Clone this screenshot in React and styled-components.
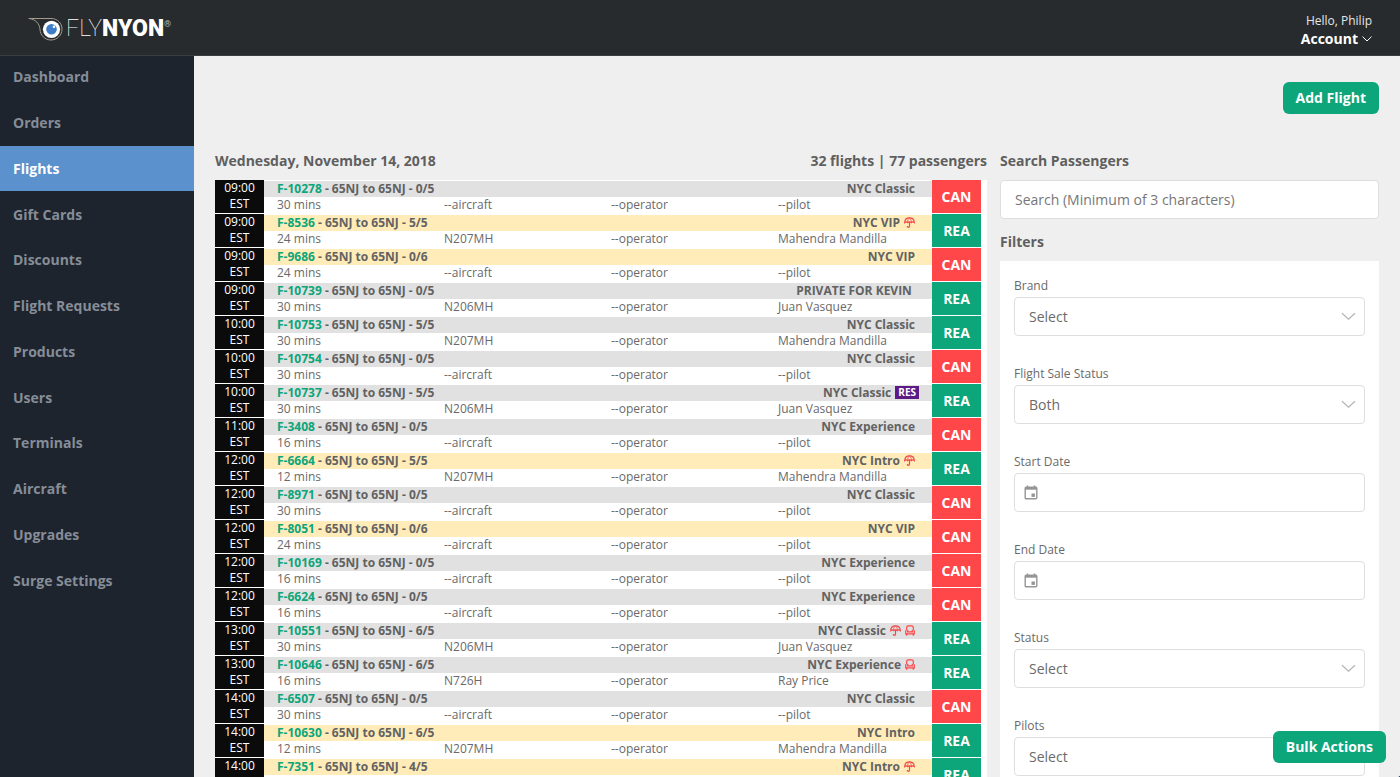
import React from "react";
import styled, { createGlobalStyle, css } from "styled-components";

const color = {
  header: "#272b2d",
  sidebar: "#1d242d",
  active: "#5b91cd",
  green: "#0da57a",
  red: "#ff4649",
  page: "#efefef",
  text: "#6a6a6a",
  heading: "#5f5f5f",
  border: "#dedede",
};

const GlobalStyle = createGlobalStyle`
  * { box-sizing: border-box; }
  body {
    margin: 0;
    background: ${color.page};
    color: ${color.text};
    font-family: "Open Sans", "Noto Sans", sans-serif;
  }
  button, input, select { font: inherit; color: inherit; }
`;

const Shell = styled.div`
  display: flex;
  flex-direction: column;
  height: 100vh;
  overflow: hidden;
`;

const Header = styled.header`
  position: relative;
  z-index: 1;
  display: flex;
  flex: none;
  align-items: center;
  justify-content: space-between;
  height: 56px;
  padding: 2px 28px 0;
  background: ${color.header};
  border-bottom: 1px solid #3a3e40;
`;

const Logo = styled.a`
  display: flex;
  align-items: center;
  color: #fff;
  font-family: Roboto, sans-serif;
  font-size: 23px;
  line-height: 26px;
  text-decoration: none;
`;

const LogoMark = styled.svg`
  width: 38px;
  height: 26px;
`;

const LogoThin = styled.span`
  font-weight: 100;
`;

const LogoBold = styled.span`
  font-weight: 900;
`;

const LogoMarkSign = styled.span`
  align-self: flex-start;
  font-size: 9px;
  line-height: 16px;
  color: #b5b5b5;
`;

const Account = styled.div`
  display: flex;
  flex-direction: column;
  align-items: flex-end;
  color: #fff;
  padding-top: 2px;
`;

const Greeting = styled.span`
  font-size: 12px;
  line-height: 18px;
  color: #e6e6e6;
`;

const AccountButton = styled.button`
  display: flex;
  align-items: center;
  gap: 4px;
  padding: 0;
  border: 0;
  background: none;
  font-size: 14px;
  font-weight: 700;
  line-height: 18px;
`;

const Body = styled.div`
  display: flex;
  flex: 1;
  min-height: 0;
`;

const Sidebar = styled.nav`
  flex: 0 0 194px;
  margin-top: -2px;
  background: ${color.sidebar};
`;

const NavList = styled.ul`
  display: grid;
  grid-auto-rows: 1fr;
  height: 549px;
  margin: 0;
  padding: 0;
  list-style: none;
`;

const NavLink = styled.a`
  display: flex;
  align-items: center;
  height: 100%;
  padding: 0 13px;
  font-size: 14px;
  font-weight: 700;
  text-decoration: none;
  color: ${(p) => (p.$active ? "#fff" : "#868d98")};
  background: ${(p) => (p.$active ? color.active : "transparent")};
`;

const Main = styled.main`
  flex: 1;
  min-width: 0;
  padding: 26px 21px;
  overflow-y: auto;
  scrollbar-width: none;
`;

const Actions = styled.div`
  display: flex;
  justify-content: flex-end;
  margin-bottom: 36px;
`;

const PrimaryButton = styled.button`
  height: 32px;
  padding: 0 13px 1px;
  border: 0;
  border-radius: 6px;
  background: ${color.green};
  color: #fff;
  font-size: 14px;
  font-weight: 700;
`;

const FloatingButton = styled(PrimaryButton)`
  position: fixed;
  right: 14px;
  bottom: 14px;
`;

const ChatBubble = styled.button`
  position: fixed;
  right: -42px;
  bottom: -42px;
  width: 50px;
  height: 50px;
  padding: 0;
  border: 0;
  border-radius: 50%;
  background: #12395a;
`;

const Columns = styled.div`
  display: grid;
  grid-template-columns: minmax(0, 1fr) 379px;
  gap: 13px;
  align-items: start;
`;

const HeadingRow = styled.div`
  display: flex;
  justify-content: space-between;
  margin-bottom: 8px;
`;

const Heading = styled.h2`
  margin: 0;
  font-size: 14px;
  font-weight: 700;
  line-height: 22px;
  color: ${color.heading};
`;

const FlightTable = styled.table`
  width: 100%;
  table-layout: fixed;
  border-spacing: 0;
  background: #fff;
  font-size: 12px;
  line-height: 16px;

  td { padding: 0; }
`;

const TimeCol = styled.col`
  width: 49px;
`;

const GutterCol = styled.col`
  width: 6px;
`;

const SideCell = styled.td`
  border-bottom: 1px solid #fff;
  color: #fff;
  text-align: center;
`;

const TimeCell = styled(SideCell)`
  background: #0b0b0b;
  vertical-align: top;
`;

const StatusCell = styled(SideCell)`
  background: ${(p) => (p.$ready ? color.green : color.red)};
  font-size: 14px;
  font-weight: 700;
`;

const titleCell = css`
  height: 17px;
  border-top: 1px solid #fff;
  background: ${(p) => (p.$vip ? "#ffecb9" : "#e1e1e1")};
  font-weight: 700;
  line-height: 15px;
  color: #626262;
  vertical-align: top;
`;

const RouteCell = styled.td`
  ${titleCell}
  && { padding-left: 13px; }
`;

const BrandCell = styled.td`
  ${titleCell}
  && { padding-right: ${(p) => (p.$tight ? "13px" : "17px")}; }
`;

const BrandLine = styled.div`
  display: flex;
  align-items: center;
  justify-content: flex-end;
  gap: 4px;
  height: 15px;
  white-space: pre;
`;

const FlightLink = styled.a`
  color: ${color.green};
  text-decoration: none;
`;

const DetailCell = styled.td`
  height: 17px;
  vertical-align: top;
  && { padding-left: 13px; }
`;

const Reserved = styled.span`
  padding: 0 3px;
  background: #5b1a85;
  color: #fff;
  font-size: 10px;
  line-height: 13px;
`;

const SearchInput = styled.input`
  display: block;
  width: 100%;
  height: 39px;
  margin-bottom: 12px;
  padding: 0 14px;
  border: 1px solid ${color.border};
  border-radius: 4px;
  background: #fff;
  font-size: 14px;
  &::placeholder { color: #777; opacity: 1; }
`;

const FilterPanel = styled.form`
  padding: 14px;
  background: #fff;
`;

const Field = styled.div`
  margin-bottom: 27px;
`;

const Label = styled.label`
  display: block;
  font-size: 12px;
  line-height: 22px;
`;

const Control = styled.div`
  position: relative;
`;

const Select = styled.select`
  display: block;
  width: 100%;
  height: 39px;
  padding: 0 14px;
  border: 1px solid ${color.border};
  border-radius: 4px;
  background: #fff;
  font-size: 14px;
  appearance: none;
`;

const DateInput = styled.input`
  display: block;
  width: 100%;
  height: 39px;
  padding: 0 14px 0 34px;
  border: 1px solid ${color.border};
  border-radius: 4px;
  background: #fff;
  font-size: 14px;
`;

const SelectArrow = styled.svg`
  position: absolute;
  top: 15px;
  right: 9px;
  width: 15px;
  height: 9px;
  pointer-events: none;
`;

const DateIcon = styled.svg`
  position: absolute;
  top: 12px;
  left: 10px;
  width: 14px;
  height: 15px;
  pointer-events: none;
`;

const Umbrella = () => (
  <svg width="11" height="11" viewBox="0 0 11 11" fill="none" stroke="#f0484a" strokeWidth="1.200" role="img" aria-label="Weather">
    <path d="M.7 5.600C.8 2.500 2.800.9 5.500.9s4.700 1.600 4.800 4.700c-1-.9-2-.9-2.900 0-.9-.9-2.900-.9-3.800 0-.9-.9-1.900-.9-2.900 0z" />
    <path d="M3.600 5.200C3.700 3.200 4.300 1.800 5.500.9 6.700 1.800 7.300 3.200 7.400 5.200" strokeWidth=".8" />
    <path d="M5.500 5v4c0 1.700-2.200 1.700-2.200.1" />
  </svg>
);

const Seat = () => (
  <svg width="10" height="11" viewBox="0 0 10 11" fill="none" stroke="#ff4649" strokeWidth="1.200" role="img" aria-label="Seat">
    <path d="M1.700 5.500V2.300C1.700 1.200 2.400.8 3.300.8h3.400c.9 0 1.600.4 1.600 1.500v3.200" />
    <path d="M.7 5.200v3.700h8.600V5.200M2.700 5v1.900h4.600V5" />
    <path d="M1.700 8.800v1.900M8.300 8.800v1.900" />
  </svg>
);

const NAV = [
  "Dashboard", "Orders", "Flights", "Gift Cards", "Discounts", "Flight Requests",
  "Products", "Users", "Terminals", "Aircraft", "Upgrades", "Surge Settings",
];

const MM = "Mahendra Mandilla";

const FLIGHTS = [
  { time: "09:00", id: "F-10278", load: "0/5", mins: 30, brand: "NYC Classic" },
  { time: "09:00", id: "F-8536", load: "5/5", mins: 24, brand: "NYC VIP", vip: true, umbrella: true, craft: "N207MH", pilot: MM },
  { time: "09:00", id: "F-9686", load: "0/6", mins: 24, brand: "NYC VIP", vip: true },
  { time: "09:00", id: "F-10739", load: "0/5", mins: 30, brand: "PRIVATE FOR KEVIN ", craft: "N206MH", pilot: "Juan Vasquez" },
  { time: "10:00", id: "F-10753", load: "5/5", mins: 30, brand: "NYC Classic", craft: "N207MH", pilot: MM },
  { time: "10:00", id: "F-10754", load: "0/5", mins: 30, brand: "NYC Classic" },
  { time: "10:00", id: "F-10737", load: "5/5", mins: 30, brand: "NYC Classic", reserved: true, craft: "N206MH", pilot: "Juan Vasquez" },
  { time: "11:00", id: "F-3408", load: "0/5", mins: 16, brand: "NYC Experience" },
  { time: "12:00", id: "F-6664", load: "5/5", mins: 12, brand: "NYC Intro", vip: true, umbrella: true, craft: "N207MH", pilot: MM },
  { time: "12:00", id: "F-8971", load: "0/5", mins: 30, brand: "NYC Classic" },
  { time: "12:00", id: "F-8051", load: "0/6", mins: 24, brand: "NYC VIP", vip: true },
  { time: "12:00", id: "F-10169", load: "0/5", mins: 16, brand: "NYC Experience" },
  { time: "12:00", id: "F-6624", load: "0/5", mins: 16, brand: "NYC Experience" },
  { time: "13:00", id: "F-10551", load: "6/5", mins: 30, brand: "NYC Classic", umbrella: true, seat: true, craft: "N206MH", pilot: "Juan Vasquez" },
  { time: "13:00", id: "F-10646", load: "6/5", mins: 16, brand: "NYC Experience", seat: true, craft: "N726H", pilot: "Ray Price" },
  { time: "14:00", id: "F-6507", load: "0/5", mins: 30, brand: "NYC Classic" },
  { time: "14:00", id: "F-10630", load: "6/5", mins: 12, brand: "NYC Intro", vip: true, craft: "N207MH", pilot: MM },
  { time: "14:00", id: "F-7351", load: "4/5", mins: 12, brand: "NYC Intro", vip: true, umbrella: true, craft: "N207MH", pilot: MM },
];

const FILTERS = [
  { id: "brand", label: "Brand", value: "Select" },
  { id: "sale", label: "Flight Sale Status", value: "Both" },
  { id: "start", label: "Start Date", date: true },
  { id: "end", label: "End Date", date: true },
  { id: "status", label: "Status", value: "Select" },
  { id: "pilots", label: "Pilots", value: "Select" },
];

function Flight({ flight }) {
  const ready = Boolean(flight.craft);
  return (
    <tbody>
      <tr>
        <TimeCell rowSpan={2}>{flight.time}<br />EST</TimeCell>
        <RouteCell colSpan={2} $vip={flight.vip}>
          <FlightLink href="#flight">{flight.id}</FlightLink> - 65NJ to 65NJ - {flight.load}
        </RouteCell>
        <BrandCell colSpan={2} $vip={flight.vip} $tight={flight.reserved}>
          <BrandLine>
            {flight.brand}
            {flight.umbrella && <Umbrella />}
            {flight.seat && <Seat />}
            {flight.reserved && <Reserved>RES</Reserved>}
          </BrandLine>
        </BrandCell>
        <StatusCell rowSpan={2} $ready={ready}>{ready ? "REA" : "CAN"}</StatusCell>
        <td rowSpan={2} />
      </tr>
      <tr>
        <DetailCell>{flight.mins} mins</DetailCell>
        <DetailCell>{flight.craft || "--aircraft"}</DetailCell>
        <DetailCell>--operator</DetailCell>
        <DetailCell>{flight.pilot || "--pilot"}</DetailCell>
      </tr>
    </tbody>
  );
}

function Filter({ filter }) {
  return (
    <Field>
      <Label htmlFor={filter.id}>{filter.label}</Label>
      <Control>
        {filter.date ? (
          <>
            <DateInput id={filter.id} type="text" />
            <DateIcon viewBox="0 0 14 15" aria-hidden="true">
              <path d="M3.500.5v2M10.500.5v2" stroke="#959595" strokeWidth="1.500" />
              <rect x="1.200" y="2.200" width="11.600" height="11.600" rx="1" fill="none" stroke="#959595" strokeWidth="1.400" />
              <path d="M1 3.500h12" stroke="#959595" strokeWidth="2.400" />
              <rect x="7.500" y="8.500" width="3.400" height="3.400" fill="#959595" />
            </DateIcon>
          </>
        ) : (
          <>
            <Select id={filter.id} defaultValue={filter.value}>
              <option>{filter.value}</option>
            </Select>
            <SelectArrow viewBox="0 0 15 9" aria-hidden="true">
              <path d="M1 1.200l6.500 6 6.500-6" fill="none" stroke="#b5b5b5" strokeWidth="1.300" />
            </SelectArrow>
          </>
        )}
      </Control>
    </Field>
  );
}

export default function App() {
  return (
    <Shell>
      <GlobalStyle />
      <Header>
        <Logo href="#home">
          <LogoMark viewBox="0 0 38 26" aria-hidden="true">
            <path d="M.8 2.500H23c6.500 0 11 4.600 11 10.700S29 24 23 24c-6.200 0-10.500-4.600-11-10.500C11.600 8 8 3.200.8 2.500z" fill="none" stroke="#a39b90" strokeWidth="1" />
            <circle cx="23.500" cy="13.300" r="8.600" fill="#fff" />
            <circle cx="23.500" cy="13.300" r="5.300" fill="#3d7dca" />
            <circle cx="26" cy="10.800" r="1.300" fill="#fff" />
          </LogoMark>
          <LogoThin>FLY</LogoThin>
          <LogoBold>NYON</LogoBold>
          <LogoMarkSign>®</LogoMarkSign>
        </Logo>
        <Account>
          <Greeting>Hello, Philip</Greeting>
          <AccountButton type="button">
            Account
            <svg width="10" height="6" viewBox="0 0 10 6" aria-hidden="true">
              <path d="M.5.600L5 5 9.500.600" fill="none" stroke="#fff" />
            </svg>
          </AccountButton>
        </Account>
      </Header>
      <Body>
        <Sidebar>
          <NavList>
            {NAV.map((item) => (
              <li key={item}>
                <NavLink href="#nav" $active={item === "Flights"}>{item}</NavLink>
              </li>
            ))}
          </NavList>
        </Sidebar>
        <Main>
          <Actions>
            <PrimaryButton type="button">Add Flight</PrimaryButton>
          </Actions>
          <Columns>
            <section>
              <HeadingRow>
                <Heading>Wednesday, November 14, 2018</Heading>
                <Heading as="span">32 flights | 77 passengers</Heading>
              </HeadingRow>
              <FlightTable>
                <colgroup>
                  <TimeCol />
                  <col />
                  <col />
                  <col />
                  <col />
                  <TimeCol />
                  <GutterCol />
                </colgroup>
                {FLIGHTS.map((flight) => (
                  <Flight key={flight.id} flight={flight} />
                ))}
              </FlightTable>
            </section>
            <aside>
              <HeadingRow>
                <Heading as="label" htmlFor="search">Search Passengers</Heading>
              </HeadingRow>
              <SearchInput id="search" type="text" placeholder="Search (Minimum of 3 characters)" />
              <HeadingRow>
                <Heading>Filters</Heading>
              </HeadingRow>
              <FilterPanel>
                {FILTERS.map((filter) => (
                  <Filter key={filter.id} filter={filter} />
                ))}
              </FilterPanel>
            </aside>
          </Columns>
        </Main>
      </Body>
      <FloatingButton type="button">Bulk Actions</FloatingButton>
      <ChatBubble type="button" aria-label="Chat" />
    </Shell>
  );
}
